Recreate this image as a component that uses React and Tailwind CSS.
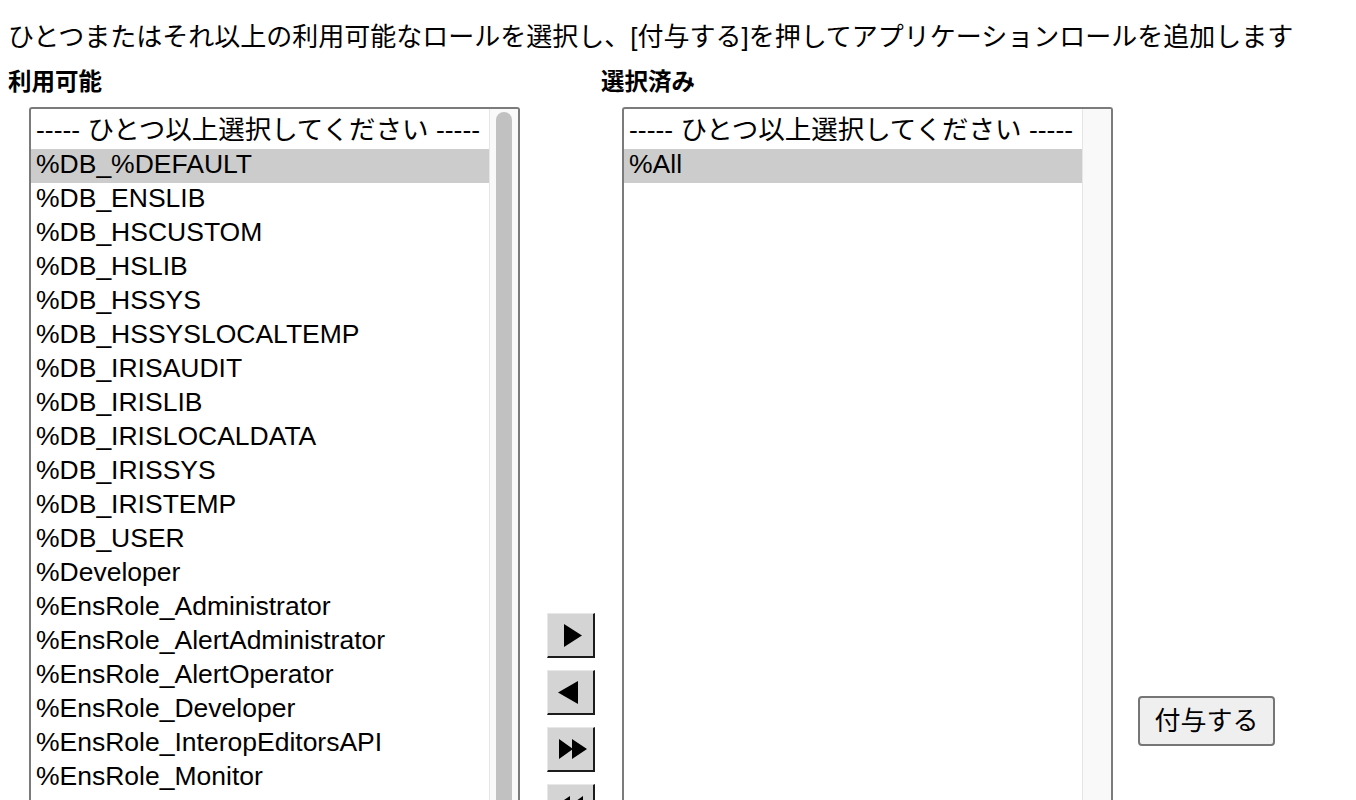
const available = [
  "%DB_%DEFAULT",
  "%DB_ENSLIB",
  "%DB_HSCUSTOM",
  "%DB_HSLIB",
  "%DB_HSSYS",
  "%DB_HSSYSLOCALTEMP",
  "%DB_IRISAUDIT",
  "%DB_IRISLIB",
  "%DB_IRISLOCALDATA",
  "%DB_IRISSYS",
  "%DB_IRISTEMP",
  "%DB_USER",
  "%Developer",
  "%EnsRole_Administrator",
  "%EnsRole_AlertAdministrator",
  "%EnsRole_AlertOperator",
  "%EnsRole_Developer",
  "%EnsRole_InteropEditorsAPI",
  "%EnsRole_Monitor",
  "%EnsRole_Operator",
  "%EnsRole_PubSubDeveloper",
  "%EnsRole_RegistryManager",
  "%EnsRole_RegistrySelect",
  "%EnsRole_RulesDeveloper",
  "%EnsRole_WebDeveloper",
  "%HS_Administrator",
  "%Manager",
  "%Operator",
  "%SQL",
  "%SecureBreak",
];

const selected = ["%All"];

const PLACEHOLDER = "----- ひとつ以上選択してください -----";

const ListBox = ({ items, showThumb }) => {
  return (
    <div className="flex h-[1228px] w-[491px] shrink-0 overflow-hidden rounded-[3px] border-2 border-[#7b7b7b] bg-white">
      <div className="flex-1 overflow-hidden pt-[6px]">
        <div className="h-[34px] whitespace-nowrap pl-[5px] text-[26.5px] leading-[31px] text-black">
          {PLACEHOLDER}
        </div>
        {items.map((item, i) => (
          <div
            key={item}
            className={
              i === 0
                ? "h-[34px] whitespace-nowrap bg-[#cccccc] pl-[5px] text-[26.5px] leading-[31px] text-black"
                : "h-[34px] whitespace-nowrap pl-[5px] text-[26.5px] leading-[31px] text-black"
            }
          >
            {item}
          </div>
        ))}
      </div>
      <div className="w-[29px] shrink-0 border-l border-[#e6e6e6] bg-[#f9f9f9] px-[6px] pt-[3px]">
        {showThumb && (
          <div className="h-[1100px] rounded-full bg-[#c1c1c1]" />
        )}
      </div>
    </div>
  );
};

const ArrowButton = ({ children }) => (
  <button className="flex h-[45px] w-[48px] items-center justify-center border-t border-l border-r-2 border-b-2 border-t-[#e8e8e8] border-l-[#e8e8e8] border-r-[#1c1c1c] border-b-[#1c1c1c] bg-[#d4d4d4]">
    {children}
  </button>
);

export default function App() {
  return (
    <div
      className="h-[800px] overflow-hidden bg-white text-black"
      style={{ fontFamily: '"Liberation Sans", "Noto Sans CJK JP", sans-serif' }}
    >
      <p className="whitespace-nowrap px-2 pt-[20px] text-[26px] leading-[34px]">
        ひとつまたはそれ以上の利用可能なロールを選択し、[付与する]を押してアプリケーションロールを追加します
      </p>

      <div className="mt-[12px] flex text-[23.5px] font-bold leading-[32px]">
        <div className="w-[593px] pl-2">利用可能</div>
        <div className="pl-2">選択済み</div>
      </div>

      <div className="mt-[9px] flex items-center pl-[29px]">
        <ListBox items={available} showThumb />

        <div className="ml-[27px] flex w-[48px] flex-col gap-[12px]">
          <ArrowButton>
            <svg width="18" height="23" viewBox="0 0 18 23" className="ml-[4px]">
              <path d="M0 0 L18 11.5 L0 23 Z" fill="#000" />
            </svg>
          </ArrowButton>
          <ArrowButton>
            <svg width="20" height="23" viewBox="0 0 20 23" className="mr-[6px]">
              <path d="M20 0 L0 11.5 L20 23 Z" fill="#000" />
            </svg>
          </ArrowButton>
          <ArrowButton>
            <svg width="28" height="20" viewBox="0 0 28 20" className="ml-[4px]">
              <path d="M0 0 L14 10 L0 20 Z M13 0 L28 10 L13 20 Z" fill="#000" />
            </svg>
          </ArrowButton>
          <ArrowButton>
            <svg width="28" height="20" viewBox="0 0 28 20" className="mr-[4px]">
              <path d="M28 0 L14 10 L28 20 Z M15 0 L0 10 L15 20 Z" fill="#000" />
            </svg>
          </ArrowButton>
        </div>

        <div className="ml-[27px]">
          <ListBox items={selected} />
        </div>

        <button className="ml-[25px] h-[50px] w-[137px] rounded-[4px] border-2 border-[#767676] bg-[#efefef] text-[26px] leading-none text-black">
          付与する
        </button>
      </div>
    </div>
  );
}
